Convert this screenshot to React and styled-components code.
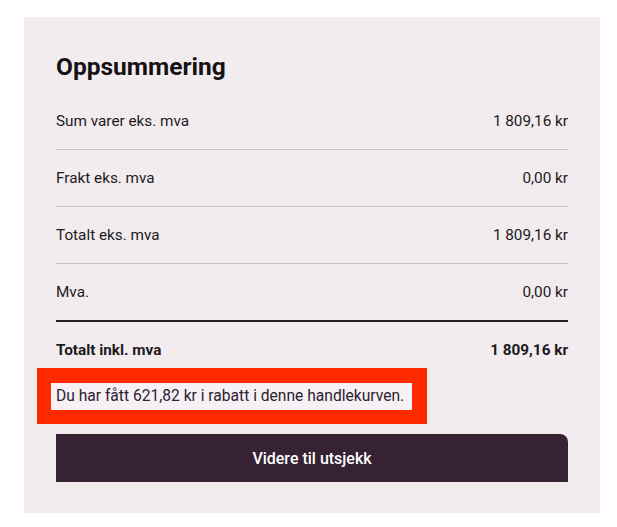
import React from "react";
import styled, { createGlobalStyle } from "styled-components";

const Global = createGlobalStyle`
  html, body { margin: 0; padding: 0; background: #ffffff; }
  body { font-family: Roboto, "Liberation Sans", Arial, sans-serif; color: #1d1a1d; }
`;

const Page = styled.div`
  padding: 17px 17px 14px 24px;
`;

const Panel = styled.section`
  width: 576px;
  box-sizing: border-box;
  background: #f2ecef;
  padding: 36px 32px 31px 32px;
`;

const Title = styled.h2`
  margin: 0 0 12px 0;
  font-size: 24.5px;
  line-height: 28px;
  font-weight: 700;
  color: #141214;
`;

const Row = styled.div`
  display: flex;
  justify-content: space-between;
  align-items: center;
  padding: 19px 0 ${(p) => (p.$total ? "9px" : "19px")} 0;
  font-size: 15.3px;
  line-height: 18px;
  font-weight: ${(p) => (p.$total ? 700 : 400)};
  border-bottom: ${(p) =>
    p.$last ? "2px solid #2b1e29" : p.$total ? "none" : "1px solid #c9c2c6"};
`;

const Notice = styled.div`
  display: inline-block;
  margin-left: -19px;
  border: 15px solid #ff2a00;
  border-left-width: 14px;
  border-bottom-width: 14px;
`;

const NoticeText = styled.p`
  margin: 0;
  padding: 0 5px;
  width: 361px;
  box-sizing: border-box;
  background: #f6f1f4;
  font-size: 15.6px;
  line-height: 27px;
  white-space: nowrap;
  overflow: hidden;
  color: #2d2230;
`;

const CheckoutButton = styled.button`
  display: block;
  width: 100%;
  height: 48px;
  margin-top: 10px;
  border: none;
  border-radius: 0 8px 0 0;
  background: #362233;
  color: #ffffff;
  font-family: Roboto, "Liberation Sans", Arial, sans-serif;
  font-size: 16px;
  font-weight: 500;
  cursor: pointer;
`;

const rows = [
  ["Sum varer eks. mva", "1 809,16 kr"],
  ["Frakt eks. mva", "0,00 kr"],
  ["Totalt eks. mva", "1 809,16 kr"],
  ["Mva.", "0,00 kr"],
];

export default function App() {
  return (
    <Page>
      <Global />
      <Panel>
        <Title>Oppsummering</Title>
        {rows.map(([label, value], i) => (
          <Row key={label} $last={i === rows.length - 1}>
            <span>{label}</span>
            <span>{value}</span>
          </Row>
        ))}
        <Row $total>
          <span>Totalt inkl. mva</span>
          <span>1 809,16 kr</span>
        </Row>
        <Notice>
          <NoticeText>Du har fått 621,82 kr i rabatt i denne handlekurven.</NoticeText>
        </Notice>
        <CheckoutButton>Videre til utsjekk</CheckoutButton>
      </Panel>
    </Page>
  );
}
